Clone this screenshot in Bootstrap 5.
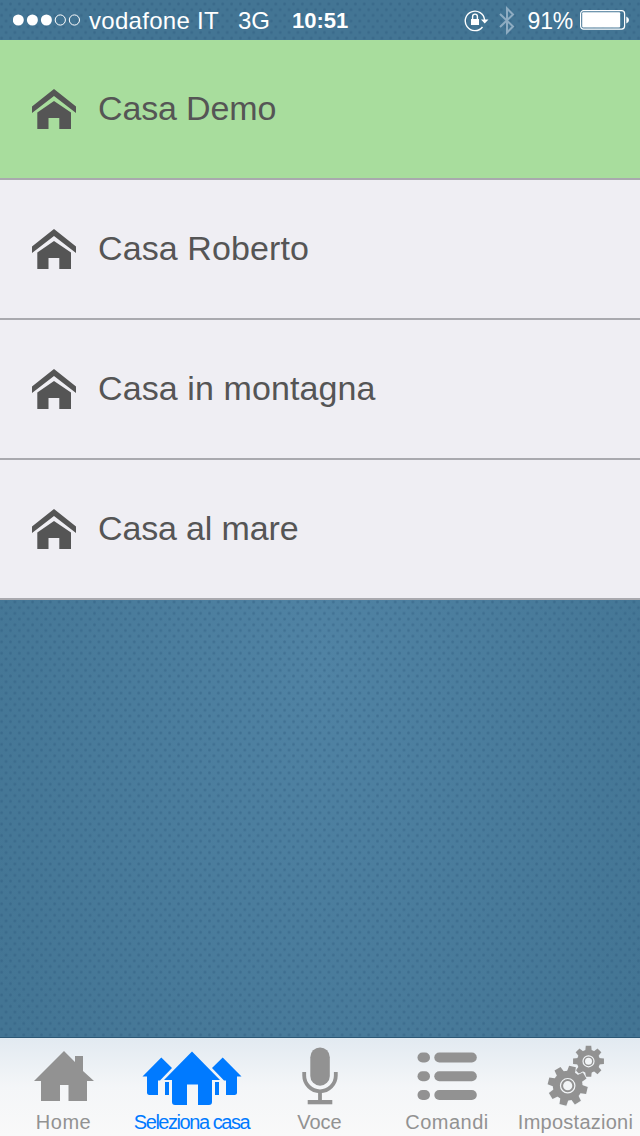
<!DOCTYPE html>
<html lang="it">
<head>
<meta charset="utf-8">
<meta name="viewport" content="width=device-width, initial-scale=1">
<title>Seleziona casa</title>
<link href="https://cdn.jsdelivr.net/npm/bootstrap@5.3.0/dist/css/bootstrap.min.css" rel="stylesheet">
<style>
body{font-family:"Liberation Sans",Arial,sans-serif;height:1136px;overflow:hidden;
 background:
 radial-gradient(circle,rgba(42,86,122,.42) 0,rgba(42,86,122,.3) 1px,transparent 2px) -2.8px -1.7px/8.85px 11.4px,
 radial-gradient(circle,rgba(42,86,122,.42) 0,rgba(42,86,122,.3) 1px,transparent 2px) 1.63px 4px/8.85px 11.4px,
 radial-gradient(ellipse 400px 650px at 320px 660px,#5083a4,#437594 95%)}
.statusbar{height:40px;line-height:38px;padding-top:1px;color:#fff;font-size:24px;padding-left:13px;padding-right:11px}
.statusbar svg{margin-bottom:2px}
.dots{width:68px;margin-right:8px}
.carrier{letter-spacing:.3px;width:149px}
.net{width:54px}
.clock{font-size:22px;font-weight:700}
.charge{font-size:23px;letter-spacing:-.2px;margin-right:7px}
.list-group-flush>.house-item,.list-group-flush>.house-item:last-child{height:140px;padding:0 32px;background:#efeef3;color:#555;border:0;border-bottom:2px solid #a9a9ae;font-size:34px;letter-spacing:.1px}
.list-group-flush>.house-item.selected{background:#a8dd9d}
.house-item span{margin-left:22px;line-height:40px;padding-bottom:2px}
.tabs{height:99px;border-top:1px solid #2c5876;background:linear-gradient(#e2eaf1,#f4f6f8 50%,#f9f9f9);color:#929292;font-size:20px}
.tab-item{width:128px;color:inherit;text-decoration:none;white-space:nowrap}
.tab-item svg{height:70px;width:128px;flex:none}
.tab-item span{line-height:28px}
.tab-item.current{color:#007aff}
</style>
</head>
<body class="d-flex flex-column">
<svg width="0" height="0" class="position-absolute" aria-hidden="true">
 <symbol id="house" viewBox="0 0 44 40"><path d="M0 17.5 22 0 44 17.5V24L22 7 0 24ZM5.3 23.5 22 12 39 23.5V40H27.3V29H16.5V40H5.3Z"/></symbol>
</svg>
<header class="statusbar d-flex align-items-center">
 <svg class="dots" height="12" viewBox="0 0 68 12"><g fill="#fff"><circle cx="5.3" cy="6" r="5.5"/><circle cx="19.4" cy="6" r="5.5"/><circle cx="33.4" cy="6" r="5.5"/></g><g fill="none" stroke="#fff"><circle cx="47.3" cy="6" r="5.1"/><circle cx="61.4" cy="6" r="5.1"/></g></svg>
 <span class="carrier">vodafone IT</span><span class="net">3G</span><span class="clock">10:51</span>
 <svg class="ms-auto" style="margin-right:8px" width="56" height="30" viewBox="0 0 56 30">
  <path d="M18.500 22A9.700 9.700 0 1 1 20.600 15" fill="none" stroke="#fff" stroke-width="1.400"/>
  <path d="M17 14.500h7.500l-3.800 4Z" fill="#fff"/><path d="M7 14h8v6H7Z" fill="#fff"/><path d="M8.600 14v-2.500a2.400 2.400 0 0 1 4.800 0V14" fill="none" stroke="#fff" stroke-width="1.400"/>
  <path d="m36 9 13 12.500-6 6v-24L49 9.500 36 22" fill="none" stroke="#8eacc2" stroke-width="2"/>
 </svg>
 <span class="charge">91%</span>
 <svg width="49" height="20" viewBox="0 0 49 20"><rect x=".6" y=".7" width="44" height="18.400" rx="3" fill="none" stroke="#fff" stroke-width="1.200"/><rect x="2.200" y="2.300" width="38" height="15.200" rx="1" fill="#fff"/><path d="M46.300 6.500q2.700 1 2.700 3.500t-2.700 3.500Z" fill="#fff"/></svg>
</header>
<main class="list-group list-group-flush rounded-0">
 <a class="list-group-item house-item selected d-flex align-items-center"><svg width="44" height="40" fill="currentColor"><use href="#house"/></svg><span style="letter-spacing:-.15px">Casa Demo</span></a>
 <a class="list-group-item house-item d-flex align-items-center"><svg width="44" height="40" fill="currentColor"><use href="#house"/></svg><span>Casa Roberto</span></a>
 <a class="list-group-item house-item d-flex align-items-center"><svg width="44" height="40" fill="currentColor"><use href="#house"/></svg><span>Casa in montagna</span></a>
 <a class="list-group-item house-item d-flex align-items-center"><svg width="44" height="40" fill="currentColor"><use href="#house"/></svg><span style="letter-spacing:-.15px">Casa al mare</span></a>
</main>
<nav class="tabs d-flex mt-auto">
 <a class="tab-item d-flex flex-column align-items-center"><svg viewBox="0 0 128 70" fill="currentColor"><path d="M34 43 64 13 75 24V18H83V33L94 43H87V63H68.500V47H60V63H41V43Z"/></svg><span style="letter-spacing:.5px;margin-right:1px">Home</span></a>
 <a class="tab-item current d-flex flex-column align-items-center"><svg viewBox="0 0 128 70" fill="currentColor"><path d="M14.500 38.500 33.300 19.500 44 30 32 42.500H30V57H21q-2-.5-2-2V38.500ZM113.500 38.500 94.700 19.500 84 30 96 42.500H98V57H107q2-.5 2-2V38.500ZM64 13.500 92 42H84V64q0 3-3 3H70V46.500H59V67H47q-3 0-3-3V42H36ZM37 44h4v13h-4ZM87 44h4v13h-4Z"/></svg><span style="letter-spacing:-1.450px;margin-right:1px">Seleziona casa</span></a>
 <a class="tab-item d-flex flex-column align-items-center"><svg viewBox="0 0 128 70" fill="currentColor"><rect x="54.300" y="9.500" width="19.500" height="38.200" rx="9.700"/><path d="M48.200 34v3.500a15.800 15.800 0 0 0 31.600 0V34M64 54v9" fill="none" stroke="currentColor" stroke-width="3.800"/><path d="M51.700 62h24.600v4.300H51.700Z"/></svg><span style="margin-right:1px">Voce</span></a>
 <a class="tab-item d-flex flex-column align-items-center"><svg viewBox="0 0 128 70" fill="currentColor"><rect x="33.500" y="14.500" width="12.500" height="10" rx="5"/><rect x="50.300" y="14.500" width="42.500" height="10" rx="5"/><rect x="33.500" y="33.300" width="12.500" height="10" rx="5"/><rect x="50.300" y="33.300" width="42.500" height="10" rx="5"/><rect x="33.500" y="52" width="12.500" height="10" rx="5"/><rect x="50.300" y="52" width="42.500" height="10" rx="5"/></svg><span style="letter-spacing:.5px;margin-right:2px">Comandi</span></a>
 <a class="tab-item d-flex flex-column align-items-center"><svg viewBox="0 0 128 70" fill="currentColor">
  <defs><g id="gear"><circle r="14.800"/><g id="teeth"><path id="tooth" d="M-4.200-13 -3.500-19.800H3.500L4.200-13Z"/><use href="#tooth" transform="rotate(45)"/><use href="#tooth" transform="rotate(90)"/><use href="#tooth" transform="rotate(135)"/></g><use href="#teeth" transform="rotate(180)"/></g></defs>
  <use href="#gear" transform="translate(76.500 23.300) scale(.78)"/><use href="#gear" transform="translate(55.700 47.700) rotate(14)" stroke="#eff3f6" stroke-width="1.500"/>
  <use href="#gear" transform="translate(55.700 47.700) rotate(14)"/>
  <g fill="none" stroke="#f2f5f7" stroke-width="1.200"><circle cx="55.700" cy="47.700" r="7.200"/><circle cx="55.700" cy="47.700" r="4.600" fill="#f2f5f7" stroke="none"/><circle cx="76.500" cy="23.300" r="5.500"/><circle cx="76.500" cy="23.300" r="3.500" fill="#f2f5f7" stroke="none"/></g></svg><span style="letter-spacing:.25px;margin-right:1px">Impostazioni</span></a>
</nav>
<script src="https://cdn.jsdelivr.net/npm/bootstrap@5.3.0/dist/js/bootstrap.bundle.min.js"></script>
</body>
</html>
